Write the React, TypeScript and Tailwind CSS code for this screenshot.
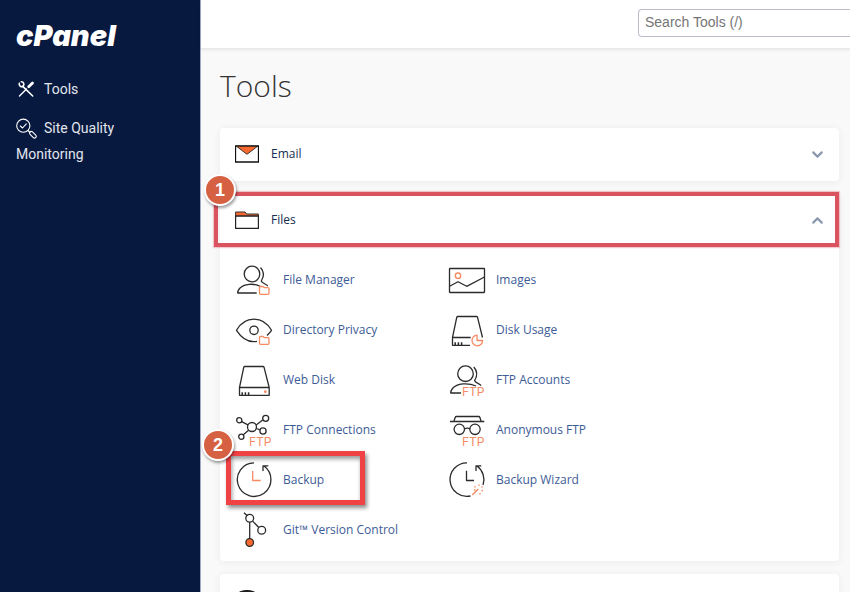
import type { ReactNode } from "react";
import { ChevronDown, ChevronUp } from "lucide-react";

const INK = "#2b2b2b";
const ORANGE = "#f58a63";

const tools: { label: string; icon: ReactNode; step?: number }[] = [
  { label: "File Manager", icon: <FileManagerIcon /> },
  { label: "Images", icon: <ImagesIcon /> },
  { label: "Directory Privacy", icon: <PrivacyIcon /> },
  { label: "Disk Usage", icon: <DiskUsageIcon /> },
  { label: "Web Disk", icon: <WebDiskIcon /> },
  { label: "FTP Accounts", icon: <FtpAccountsIcon /> },
  { label: "FTP Connections", icon: <FtpConnectionsIcon /> },
  { label: "Anonymous FTP", icon: <AnonymousIcon /> },
  { label: "Backup", icon: <BackupIcon />, step: 2 },
  { label: "Backup Wizard", icon: <BackupWizardIcon /> },
  { label: "Git™ Version Control", icon: <GitIcon /> },
];

export default function App() {
  return (
    <div className="flex h-screen overflow-hidden bg-[#f9f9f9] font-['Open_Sans',sans-serif]">
      <Sidebar />
      <div className="flex min-w-0 flex-1 flex-col">
        <header className="flex h-[49px] shrink-0 items-start justify-end border-b border-[#e8e8e8] bg-white pt-[9px] shadow-[0_1px_3px_rgba(0,0,0,0.08)]">
          <input
            type="search"
            aria-label="Search Tools"
            placeholder="Search Tools (/)"
            className="h-7 w-[212px] rounded-l border border-r-0 border-[#b9bdc9] bg-white px-[6px] pb-0.5 font-['Liberation_Sans',sans-serif] text-sm text-gray-700 outline-none placeholder:text-[#757575]"
          />
        </header>
        <main className="flex-1 pt-[15px] pr-[11px] pl-[19px]">
          <h1 className="mb-5 text-[30px] leading-[44px] font-light text-[#333]">
            Tools
          </h1>
          <div className="flex flex-col gap-[13px]">
            <Card>
              <CardHeader icon={<EmailIcon />} label="Email" />
            </Card>
            <Card>
              <div className="relative">
                <CardHeader icon={<FolderIcon />} label="Files" open />
                <div className="pointer-events-none absolute -top-[2px] right-0 bottom-0 -left-[6px] border-4 border-[#d9545f] shadow-[0_0_1px_1px_rgba(217,84,95,0.3)]" />
                <StepBadge className="-top-5 -left-4">1</StepBadge>
              </div>
              <ul className="grid max-w-[442px] grid-cols-2 pt-2 pb-1.5 pl-4">
                {tools.map((tool) => (
                  <li key={tool.label} className="relative">
                    <a
                      href="#"
                      className="flex h-[50px] items-center gap-[11px] text-xs whitespace-nowrap text-[#3d5c96] hover:underline"
                    >
                      {tool.icon}
                      {tool.label}
                    </a>
                    {tool.step && (
                      <>
                        <div className="pointer-events-none absolute -top-1 -left-[10px] h-[54px] w-[139px] border-[5px] border-[#f04145] shadow-[2px_3px_4px_rgba(0,0,0,0.45),inset_1px_3px_4px_rgba(0,0,0,0.4)]" />
                        <StepBadge className="-top-[26px] -left-[34px]">
                          {tool.step}
                        </StepBadge>
                      </>
                    )}
                  </li>
                ))}
              </ul>
            </Card>
            <Card>
              <div className="flex h-[53px] items-start px-[15px] pt-4">
                <DatabaseIcon />
              </div>
            </Card>
          </div>
        </main>
      </div>
    </div>
  );
}

function Sidebar() {
  return (
    <aside className="w-[201px] shrink-0 border-r border-[#a3a7c4] bg-[#08193f] px-4 pt-5">
      <a
        href="#"
        className="block font-['Inter',sans-serif] text-[29px] leading-8 font-black text-white italic"
      >
        cPanel
      </a>
      <nav className="flex flex-col gap-[13px] pt-6 pr-12 font-['Roboto',sans-serif] text-sm leading-[26px] text-[#e3e6ee]">
        <a href="#">
          <ToolsIcon />
          Tools
        </a>
        <a href="#">
          <QualityIcon />
          Site Quality Monitoring
        </a>
      </nav>
    </aside>
  );
}

function Card({ children }: { children: ReactNode }) {
  return (
    <section className="rounded-sm bg-white shadow-[0_1px_8px_rgba(0,0,0,0.06)]">
      {children}
    </section>
  );
}

function CardHeader({
  icon,
  label,
  open = false,
}: {
  icon: ReactNode;
  label: string;
  open?: boolean;
}) {
  const Chevron = open ? ChevronUp : ChevronDown;
  return (
    <button
      type="button"
      aria-expanded={open}
      className="flex h-[53px] w-full items-center gap-3 pr-[13px] pb-px pl-[15px] text-xs text-[#152c4f]"
    >
      {icon}
      {label}
      <Chevron size={17} strokeWidth={3} className="ml-auto text-[#8a98ae]" />
    </button>
  );
}

function StepBadge({
  className,
  children,
}: {
  className: string;
  children: ReactNode;
}) {
  return (
    <span
      className={`absolute flex size-8 items-center justify-center rounded-full border-2 border-white bg-[#d66142] font-['Liberation_Sans',sans-serif] text-lg leading-none font-bold text-white shadow-[1px_2px_3px_rgba(0,0,0,0.4)] ${className}`}
    >
      {children}
    </span>
  );
}

/* Icons */

function ToolSvg({ children }: { children: ReactNode }) {
  return (
    <svg
      width="36"
      height="36"
      viewBox="0 0 36 36"
      fill="none"
      stroke={INK}
      strokeWidth="1.3"
      strokeLinejoin="round"
      className="shrink-0 overflow-visible"
      aria-hidden="true"
    >
      {children}
    </svg>
  );
}

function FtpMark() {
  return (
    <text
      x="13"
      y="34"
      fill={ORANGE}
      stroke="none"
      fontSize="12"
      fontFamily="Inter, sans-serif"
    >
      FTP
    </text>
  );
}

function FolderMark() {
  return (
    <path
      d="M23.5 25.5q0-1 1-1h2.5l1.5 1.2h3.5q1 0 1 1v4.6q0 1-1 1h-7.5q-1 0-1-1z"
      stroke={ORANGE}
    />
  );
}

function FileManagerIcon() {
  return (
    <ToolSvg>
      <circle cx="16" cy="12" r="7.8" />
      <path d="M24.5 5.5c3.6 4 3.6 9 .8 13.5 1 2.5 4.5 2.6 6.5 5" />
      <path d="M24.5 24.5C18 21 8 21.5 3.5 26.5 2 28.5 1.7 29.5 1.7 31H20.7" />
      <FolderMark />
    </ToolSvg>
  );
}

function PrivacyIcon() {
  return (
    <ToolSvg>
      <path d="M21 29.3C12 31 5.5 26 .5 18.3 9 3.5 27 3.5 35.5 18.3 34 20.5 32.5 22 31 23.5" />
      <circle cx="18" cy="18.3" r="4.2" />
      <FolderMark />
    </ToolSvg>
  );
}

function Ticks() {
  return <path d="M6.2 30.3v3M9.4 30.3v3M12.6 30.3v3" strokeWidth="1.5" />;
}

function WebDiskIcon() {
  return (
    <ToolSvg>
      <path d="M3.500 25.500 7.800 5.200q.2-.7 1-.7H27q.8 0 1 .7L33.200 25.500v7.800H3.500zH33.200" />
      <Ticks />
      <circle cx="29.300" cy="29.700" r="1.400" fill={ORANGE} stroke="none" />
    </ToolSvg>
  );
}

function DiskUsageIcon() {
  return (
    <ToolSvg>
      <path d="M21 33.300H3.500V25.500L7.800 5.200q.2-.7 1-.7H27.500q.8 0 1 .7L33.500 25.500M3.500 25.500H21.700" />
      <Ticks />
      <path d="M28 23.200a5.300 5.300 0 1 0 5.600 5.300H28z" stroke={ORANGE} />
    </ToolSvg>
  );
}

function ImagesIcon() {
  return (
    <ToolSvg>
      <rect x=".5" y="6.500" width="35" height="24" rx=".5" />
      <path d="M.5 24.300 9 19.700 17.700 24.300 35.500 15" />
      <circle cx="9" cy="13.700" r="2.700" stroke={ORANGE} />
    </ToolSvg>
  );
}

function FtpAccountsIcon() {
  return (
    <ToolSvg>
      <circle cx="16.500" cy="11.700" r="7.800" />
      <path d="M24.800 5c3.600 4 3.600 9 .8 13.500 1 2.700 4.500 2.800 6.500 5.200" />
      <path d="M27 24C19 20.500 8 21.200 3.500 26.500 2 28.500 1.700 29.500 1.700 31H12" />
      <FtpMark />
    </ToolSvg>
  );
}

function FtpConnectionsIcon() {
  return (
    <ToolSvg>
      <path d="M5.700 9.600 11.900 12.800M20.200 13 27 7.800M20.500 16.500 24 17.800M12.600 18.300 7.300 22.800" />
      <circle cx="3.300" cy="8.300" r="2.600" />
      <circle cx="29.700" cy="6.300" r="3" />
      <circle cx="16" cy="15" r="4.500" />
      <circle cx="27" cy="19" r="3.100" />
      <circle cx="5.300" cy="24.700" r="2.600" />
      <FtpMark />
    </ToolSvg>
  );
}

function AnonymousIcon() {
  return (
    <ToolSvg>
      <path d="M1 9.500H35.300M4.800 9.500 6.300 5.300q.3-.8 1-.8H29.800q.8 0 1 .8L32.200 9.500M15.500 17q2.800-1.600 5.600 0" />
      <circle cx="10.300" cy="17.300" r="5.200" />
      <circle cx="26" cy="17.300" r="5.200" />
      <FtpMark />
    </ToolSvg>
  );
}

function BackupIcon() {
  return (
    <ToolSvg>
      <path d="M18 .8A16.800 16.800 0 1 0 28 4M27 9V3.800H32.300" />
      <path d="M16.700 9V18.500H24.700" stroke={ORANGE} />
    </ToolSvg>
  );
}

function BackupWizardIcon() {
  return (
    <ToolSvg>
      <path d="M18 .8A16.800 16.800 0 1 0 21.500 34M34 23A16.800 16.800 0 0 0 28 4M27 9V3.800H32.300" />
      <path d="M17.500 8.700V18.500H25" />
      <path d="M23.300 33 29.300 27" stroke={ORANGE} />
      <path
        d="M26 24v1.500M30 22.500v1.500M33.500 24.500l-1 1M32.500 28.500h1.500M31 31v1.500M26.500 28h-1.500"
        stroke={ORANGE}
      />
    </ToolSvg>
  );
}

function GitIcon() {
  return (
    <ToolSvg>
      <path d="M8 .8 11 3.600M16.600 9.100 22.800 15.500M13.700 10.300V26.700" />
      <circle cx="13.700" cy="6.300" r="3.900" />
      <circle cx="25.700" cy="18.300" r="3.900" />
      <circle cx="13.700" cy="30.500" r="3.800" fill="#f9692f" />
    </ToolSvg>
  );
}

function EmailIcon() {
  return (
    <svg width="24" height="18" viewBox="0 0 24 18" aria-hidden="true">
      <path d="M.5 1H23.500V17H.5z" fill="#fff" stroke="#111" strokeWidth="1.300" />
      <path d="M1.500 1.300 12 9.300 22.500 1.300z" fill="#f9692f" stroke="#111" strokeWidth=".8" />
    </svg>
  );
}

function FolderIcon() {
  return (
    <svg width="24" height="18" viewBox="0 0 24 18" aria-hidden="true">
      <path d="M.6 5V1H10L11.500 3H23.400V5z" fill="#f9692f" stroke="#333" />
      <path d="M.6 5.200H23.400V17.400H.6z" fill="#fff" stroke="#222" strokeWidth="1.200" />
    </svg>
  );
}

function DatabaseIcon() {
  return (
    <svg width="24" height="24" viewBox="0 0 24 24" fill="none" stroke="#111" aria-hidden="true">
      <ellipse cx="12" cy="4" rx="9" ry="3.400" fill="#222" />
      <path d="M3 4v15c0 4.500 18 4.500 18 0V4" />
    </svg>
  );
}

function ToolsIcon() {
  return (
    <svg
      width="20"
      height="20"
      viewBox="0 0 20 20"
      fill="none"
      stroke="#fff"
      strokeLinecap="round"
      className="mr-2 inline-block align-middle"
      aria-hidden="true"
    >
      <path d="M6.500 6.200 16.700 16" strokeWidth="1.600" />
      <path d="M3.300 3.300A2.700 2.700 0 0 0 7 6.500 2.700 2.700 0 0 0 5.300 1.800" strokeWidth="1.600" />
      <path d="M3.500 16 10.500 9" strokeWidth="1.400" />
      <path d="M12.700 6.800 16.500 3" strokeWidth="2.800" />
    </svg>
  );
}

function QualityIcon() {
  return (
    <svg
      width="20"
      height="20"
      viewBox="0 0 20 20"
      fill="none"
      stroke="#fff"
      strokeWidth="1.100"
      strokeLinecap="round"
      strokeLinejoin="round"
      className="mr-2 inline-block overflow-visible align-middle"
      aria-hidden="true"
    >
      <circle cx="7.300" cy="6.700" r="6.600" />
      <path d="M4.300 7 6.500 9 10.300 4.800M12 11.500 14 13.500" />
      <rect x="-1.600" y="0" width="3.400" height="8" rx="1.700" transform="translate(14 13) rotate(-45)" />
    </svg>
  );
}
